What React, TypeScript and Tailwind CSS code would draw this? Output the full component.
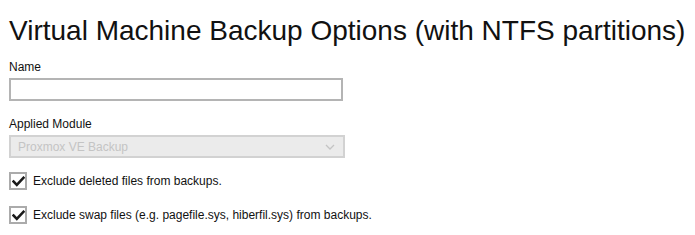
import React from "react";

function Check() {
  return (
    <span className="flex h-[18px] w-[18px] shrink-0 items-center justify-center border-2 border-[#ababab] bg-white">
      <svg width="13" height="11" viewBox="0 0 13 11">
        <path d="M1.5 5.5 L4.8 8.8 L11.5 1.8" fill="none" stroke="#1a1a1a" strokeWidth="2.6" strokeLinecap="square" />
      </svg>
    </span>
  );
}

export default function App() {
  return (
    <div className="h-[235px] w-[695px] bg-white pl-[9px] pt-[15px] text-[#111]" style={{ fontFamily: '"Liberation Sans", Arial, sans-serif' }}>
      <h1 className="text-[28px] leading-[32px] text-[#111]">Virtual Machine Backup Options (with NTFS partitions)</h1>
      <div className="mt-[13px] text-[12px] leading-[14px]">Name</div>
      <input className="mt-[4px] block h-[23px] w-[334px] border-2 border-[#b4b4b4] bg-white outline-none" />
      <div className="mt-[16px] text-[12px] leading-[14px]">Applied Module</div>
      <div className="mt-[4px] flex h-[23px] w-[336px] items-center justify-between border-2 border-[#d2d2d2] bg-[#ebebeb] pl-[7px] pr-[8px] text-[12px] text-[#c4c4c4]">
        <span>Proxmox VE Backup</span>
        <svg width="10" height="6" viewBox="0 0 10 6">
          <path d="M1 1 L5 5 L9 1" fill="none" stroke="#c4c4c4" strokeWidth="1.3" />
        </svg>
      </div>
      <div className="mt-[14px] flex items-center gap-[6px] text-[12px]">
        <Check />
        <span>Exclude deleted files from backups.</span>
      </div>
      <div className="mt-[16px] flex items-center gap-[6px] text-[12px]">
        <Check />
        <span>Exclude swap files (e.g. pagefile.sys, hiberfil.sys) from backups.</span>
      </div>
    </div>
  );
}
